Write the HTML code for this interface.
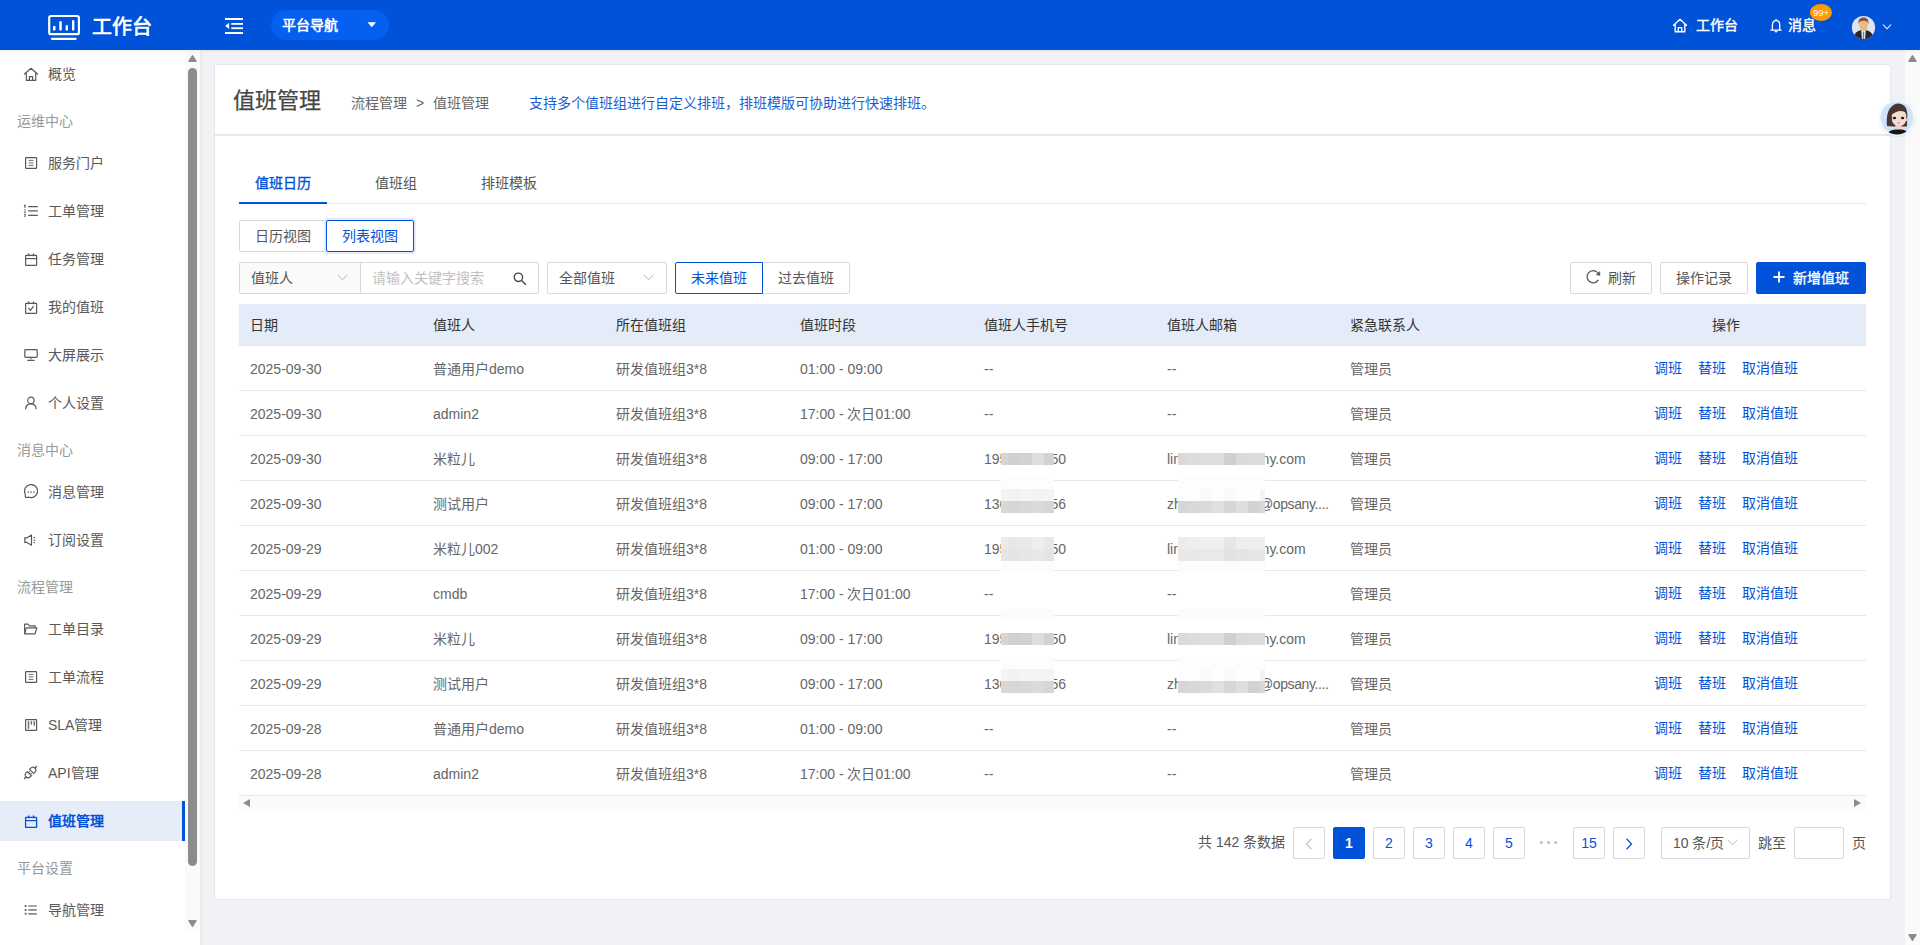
<!DOCTYPE html>
<html lang="zh-CN"><head><meta charset="utf-8">
<style>
*{box-sizing:border-box;margin:0;padding:0}
html,body{width:1920px;height:945px;overflow:hidden}
body{position:relative;background:#f0f2f5;font-family:"Liberation Sans",sans-serif;font-size:14px;color:#555}
.a{position:absolute}
.t{position:absolute;white-space:nowrap;line-height:20px}
/* header */
#hd{left:0;top:0;width:1920px;height:50px;background:#0052d9;}
#hdl{left:0;top:0;width:200px;height:50px;background:#0050d6}
/* sidebar */
#sb{left:0;top:50px;width:200px;height:895px;background:#fff}
#sbtrack{left:185px;top:50px;width:15px;height:881px;background:#fafafa}
#sbthumb{left:188px;top:68px;width:9px;height:798px;background:#8c8c8c;border-radius:5px}
.tri-up{width:0;height:0;border-left:4.5px solid transparent;border-right:4.5px solid transparent;border-bottom:7px solid #8c8c8c}
.tri-dn{width:0;height:0;border-left:4.5px solid transparent;border-right:4.5px solid transparent;border-top:7px solid #8c8c8c}
.si{position:absolute;left:0;width:185px;height:40px}
.si .ic{position:absolute;left:24px;top:13px;width:14px;height:14px}
.si .tx{position:absolute;left:48px;top:10px;line-height:20px;color:#595959;white-space:nowrap}
.sg{position:absolute;left:17px;line-height:20px;color:#999;white-space:nowrap}
.si.on{background:#e6edf9}
.si.on .tx{color:#0052d9;font-weight:bold}
.si.on:after{content:"";position:absolute;right:0;top:0;width:3px;height:40px;background:#0052d9}
/* page scrollbar */
#pgtrack{left:1905px;top:50px;width:15px;height:895px;background:#fafafa}
/* card */
#card{left:214px;top:64px;width:1677px;height:836px;background:#fff;border:1px solid #e6e7ea;border-radius:2px}
#cardsep{left:214px;top:134px;width:1677px;height:2px;background:#e8e8e8}
.btn{position:absolute;height:32px;border:1px solid #d9d9d9;border-radius:2px;background:#fff;color:#555;line-height:30px;text-align:center;white-space:nowrap}
.blue{color:#0052d9}
/* table */
#thead{left:239px;top:304px;width:1627px;height:42px;background:#e4ebf9;border-bottom:1px solid #e3e5e8}
.th{position:absolute;top:315px;line-height:20px;color:#333;white-space:nowrap}
.row{position:absolute;left:239px;width:1627px;height:45px;border-bottom:1px solid #e8e8e8}
.td{position:absolute;top:13px;line-height:20px;color:#666;white-space:nowrap}
.op{position:absolute;top:12px;line-height:20px;color:#0052d9;white-space:nowrap}
.pg{position:absolute;top:827px;width:32px;height:32px;border:1px solid #d9d9d9;border-radius:2px;text-align:center;line-height:30px;color:#0052d9;background:#fff}
.px{position:absolute;left:0;top:0}
.sx{position:absolute;top:0}
</style></head><body>
<div id="hd" class="a"></div>

<svg class="a" style="left:44px;top:10px" width="40" height="34" viewBox="0 0 40 34">
<rect x="5.2" y="6" width="29.7" height="18.2" rx="1.8" fill="none" stroke="#fff" stroke-width="2.2"/>
<rect x="9" y="15.8" width="2.5" height="4.8" rx="1.2" fill="#fff"/>
<rect x="15.3" y="11" width="2.5" height="9.6" rx="1.2" fill="#fff"/>
<rect x="21.6" y="15.1" width="2.4" height="5.5" rx="1.2" fill="#fff"/>
<rect x="28" y="9.9" width="2.4" height="10.7" rx="1.2" fill="#fff"/>
<rect x="6.8" y="27.7" width="25.9" height="2.2" rx="1.1" fill="#fff"/>
</svg>
<div class="t" style="left:92px;top:13px;font-size:20px;line-height:28px;color:#fff;font-weight:bold">工作台</div>
<svg class="a" style="left:218px;top:12px" width="32" height="28" viewBox="0 0 32 28">
<rect x="7" y="6" width="18" height="2" fill="#fff"/>
<rect x="13.3" y="11" width="11.7" height="1.8" fill="#fff"/>
<rect x="13.3" y="15.3" width="11.7" height="1.8" fill="#fff"/>
<rect x="7" y="20" width="18" height="2" fill="#fff"/>
<path d="M11.1 10.8 L11.1 17 L7.1 13.9 Z" fill="#fff"/>
</svg>
<div class="a" style="left:271px;top:10px;width:118px;height:30px;border-radius:15px;background:#0560f2"></div>
<div class="t" style="left:282px;top:15px;color:#fff;font-weight:bold">平台导航</div>
<svg class="a" style="left:367px;top:22px" width="10" height="6" viewBox="0 0 10 6"><path d="M0.5 0.3 L9 0.3 L4.75 5.3 Z" fill="#fff"/></svg>

<svg class="a" style="left:1672px;top:18px" width="16" height="15" viewBox="0 0 16 15">
<path d="M1.5 7.2 L8 1.2 L14.5 7.2 M3.2 5.8 L3.2 13.8 L12.8 13.8 L12.8 5.8 M6.3 13.8 L6.3 9.6 L9.7 9.6 L9.7 13.8" fill="none" stroke="#fff" stroke-width="1.4" stroke-linejoin="round" stroke-linecap="round"/>
</svg>
<div class="t" style="left:1696px;top:15px;color:#fff;-webkit-text-stroke:0.4px #fff">工作台</div>
<svg class="a" style="left:1769px;top:18px" width="14" height="15" viewBox="0 0 14 15"><path d="M3.4 12 L3.4 6.8 C3.4 4.2 5 2.6 7.05 2.6 C9.1 2.6 10.7 4.2 10.7 6.8 L10.7 12 M1.9 12.2 L12.2 12.2" fill="none" stroke="#fff" stroke-width="1.3" stroke-linecap="round" stroke-linejoin="round"/><path d="M7.05 1 L7.05 2.6" stroke="#fff" stroke-width="1.3"/><path d="M5.7 13.3 L8.4 13.3 L7.05 14.3 Z" fill="#fff" stroke="#fff" stroke-width="0.8" stroke-linejoin="round"/></svg>
<div class="t" style="left:1788px;top:15px;color:#fff;-webkit-text-stroke:0.4px #fff">消息</div>
<div class="a" style="left:1810px;top:4px;width:22px;height:17px;border-radius:50%;background:#ff9a00;color:#fff;font-size:9.5px;line-height:18px;text-align:center">99+</div>
<svg class="a" style="left:1851px;top:15px" width="25" height="25" viewBox="0 0 25 25">
<defs><clipPath id="hac"><circle cx="12.5" cy="12.5" r="11.6"/></clipPath></defs>
<circle cx="12.5" cy="12.5" r="11.6" fill="#dfe3ec"/>
<g clip-path="url(#hac)">
<path d="M2 26 C2.5 18.5 6 16 10 15.3 L15 15.3 C19 16 22.5 18.5 23 26 Z" fill="#262626"/>
<path d="M10.3 15.3 L14.7 15.3 L14 26 L11 26 Z" fill="#fff"/>
<path d="M11.7 16.5 L13.3 16.5 L13.2 26 L11.8 26 Z" fill="#4a86d8"/>
<path d="M8 7 C8 4.5 9.8 3.8 12.5 3.8 C15.2 3.8 17 4.5 17 7 L16.8 10.5 C16.5 13.5 14.6 15.5 12.5 15.5 C10.4 15.5 8.5 13.5 8.2 10.5 Z" fill="#ecb87d"/>
<path d="M7.6 9.5 C7 4.3 9 2.4 12.5 2.4 C16 2.4 18 4.3 17.4 9.5 C17 6.5 16 5.8 12.5 5.8 C9 5.8 8 6.5 7.6 9.5 Z" fill="#7b5246"/>
</g>
</svg>
<svg class="a" style="left:1882px;top:23px" width="10" height="8" viewBox="0 0 10 8"><path d="M1 1.5 L5 5.8 L9 1.5" fill="none" stroke="#fff" stroke-width="1.1"/></svg>

<div id="sb" class="a"></div>
<div id="sbtrack" class="a"></div>
<div id="sbthumb" class="a"></div>
<div class="si" style="top:54px"><svg class="ic" style="left:23px;top:13px;width:16px;height:15px" viewBox="0 0 16 15"><path d="M1.5 7 L8 1.3 L14.5 7 M3.3 5.6 L3.3 13.4 L12.7 13.4 L12.7 5.6 M6.4 13.4 L6.4 9.6 L9.6 9.6 L9.6 13.4" stroke="#595959" stroke-width="1.2" fill="none" stroke-linejoin="round" stroke-linecap="round"/></svg><div class="tx">概览</div></div>
<div class="sg" style="top:111px">运维中心</div>
<div class="si" style="top:143px"><svg class="ic" viewBox="0 0 14 14"><rect x="1.6" y="1.6" width="11" height="10.8" rx="0.6" stroke="#595959" stroke-width="1.2" fill="none"/><path d="M4.6 4.4 H9.5 M4.6 6.9 H9.5 M4.6 9.4 H9.5" stroke="#595959" stroke-width="0.9"/></svg><div class="tx">服务门户</div></div>
<div class="si" style="top:191px"><svg class="ic" style="left:23px;width:16px" viewBox="0 0 16 14"><path d="M0.9 1.6 L2 1.2 L2 4" fill="none" stroke="#595959" stroke-width="1.1"/><path d="M1 5.9 C1.4 5.4 2.6 5.4 2.6 6.2 C2.6 6.8 1.2 7.4 1 8.3 L2.9 8.3" fill="none" stroke="#6a6a6a" stroke-width="0.9"/><path d="M1 10.3 L2.8 10.3 L1.8 11.3 C2.8 11.3 3 12.8 1 12.6" fill="none" stroke="#595959" stroke-width="0.9"/><path d="M5.2 2.6 H14.8 M5.2 6.9 H14.8 M5.2 11.4 H14.8" stroke="#595959" stroke-width="1.2"/></svg><div class="tx">工单管理</div></div>
<div class="si" style="top:239px"><svg class="ic" viewBox="0 0 14 14"><rect x="1.6" y="3.3" width="11" height="10" rx="0.4" stroke="#595959" stroke-width="1.2" fill="none"/><path d="M1.6 6.6 H12.6" stroke="#595959" stroke-width="1.2" fill="none"/><path d="M4.6 1.6 V4.2 M9.5 1.6 V4.2" stroke="#595959" stroke-width="1.3"/></svg><div class="tx">任务管理</div></div>
<div class="si" style="top:287px"><svg class="ic" viewBox="0 0 14 14"><rect x="1.6" y="3.3" width="11" height="10" rx="0.4" stroke="#595959" stroke-width="1.2" fill="none"/><path d="M4.6 1.6 V4.2 M9.5 1.6 V4.2" stroke="#595959" stroke-width="1.3"/><path d="M4.4 8 L6.5 10.3 L9.6 6.1" stroke="#595959" stroke-width="1.2" fill="none"/></svg><div class="tx">我的值班</div></div>
<div class="si" style="top:335px"><svg class="ic" style="left:23px;width:16px" viewBox="0 0 16 14"><rect x="1.8" y="1.6" width="12.4" height="7.8" rx="0.8" stroke="#595959" stroke-width="1.2" fill="none"/><path d="M8 9.7 V11.6" stroke="#7a7a7a" stroke-width="1.2"/><path d="M4.8 12.3 H11.2" stroke="#595959" stroke-width="1.3" stroke-linecap="round"/></svg><div class="tx">大屏展示</div></div>
<div class="si" style="top:383px"><svg class="ic" viewBox="0 0 14 14"><circle cx="6.9" cy="4.4" r="3.2" stroke="#595959" stroke-width="1.2" fill="none"/><path d="M1.5 13.2 C1.8 9.6 4 7.8 6.9 7.8 C9.8 7.8 12 9.6 12.3 13.2" stroke="#595959" stroke-width="1.2" fill="none"/></svg><div class="tx">个人设置</div></div>
<div class="sg" style="top:440px">消息中心</div>
<div class="si" style="top:472px"><svg class="ic" style="left:23px;width:15px;height:15px;top:12px" viewBox="0 0 15 15"><path d="M2.5 13.5 L2.1 9.6 A6.5 6.5 0 1 1 6 13.2 Z" stroke="#595959" stroke-width="1.2" fill="none" stroke-linejoin="round"/><rect x="4.6" y="7.4" width="1.5" height="1.5" fill="#7a7a7a"/><rect x="7.4" y="7.4" width="1.5" height="1.5" fill="#7a7a7a"/><rect x="10.3" y="7.4" width="1.5" height="1.5" fill="#7a7a7a"/></svg><div class="tx">消息管理</div></div>
<div class="si" style="top:520px"><svg class="ic" style="left:23px;width:15px;top:13px" viewBox="0 0 15 14"><path d="M1.8 4.8 L4 4.8 L8.5 2 L8.5 12.2 L4 9.4 L1.8 9.4 Z" stroke="#595959" stroke-width="1.2" fill="none" stroke-linejoin="round"/><path d="M10.6 5.2 L12 4.3 M10.6 9.2 L12 10.1" stroke="#595959" stroke-width="1.1"/><rect x="10.6" y="6.7" width="2" height="1.3" fill="#8a8a8a"/></svg><div class="tx">订阅设置</div></div>
<div class="sg" style="top:577px">流程管理</div>
<div class="si" style="top:609px"><svg class="ic" style="left:23px;width:15px" viewBox="0 0 15 14"><path d="M1.6 11.8 L1.6 2.2 L5 2.2 L6.4 3.9 L12.2 3.9 L12.2 5.6" stroke="#595959" stroke-width="1.2" fill="none" stroke-linejoin="round"/><path d="M1.6 11.8 L3.2 5.9 L13.9 5.9 L12 11.8 Z" stroke="#595959" stroke-width="1.2" fill="none" stroke-linejoin="round"/></svg><div class="tx">工单目录</div></div>
<div class="si" style="top:657px"><svg class="ic" viewBox="0 0 14 14"><rect x="1.6" y="1.6" width="11" height="10.8" rx="0.6" stroke="#595959" stroke-width="1.2" fill="none"/><path d="M4.6 4.4 H9.5 M4.6 6.9 H9.5 M4.6 9.4 H9.5" stroke="#595959" stroke-width="0.9"/></svg><div class="tx">工单流程</div></div>
<div class="si" style="top:705px"><svg class="ic" viewBox="0 0 14 14"><rect x="1.6" y="1.6" width="11" height="10.8" rx="0.5" stroke="#595959" stroke-width="1.2" fill="none"/><path d="M4.5 3.8 V10.2 M7.4 3.8 V6.1 M10.3 3.8 V7.2" stroke="#707070" stroke-width="1.5" stroke-linecap="round"/></svg><div class="tx">SLA管理</div></div>
<div class="si" style="top:753px"><svg class="ic" style="left:23px;width:15px;height:15px;top:12px" viewBox="0 0 15 15"><path d="M1.5 13.5 L3 12 M13.5 1.5 L12 3" stroke="#595959" stroke-width="1.3" stroke-linecap="round"/><path d="M3 12 C1.6 10.6 2 8.8 3.5 7.3 L4.3 6.6 L8.4 10.7 L7.7 11.5 C6.2 13 4.4 13.4 3 12 Z M5.6 7.6 L6.8 6.4 M7.4 9.4 L8.6 8.2" stroke="#595959" stroke-width="1.2" fill="none" stroke-linejoin="round"/><path d="M12 3 C13.4 4.4 13 6.2 11.5 7.7 L10.7 8.4 L6.6 4.3 L7.3 3.5 C8.8 2 10.6 1.6 12 3 Z" stroke="#595959" stroke-width="1.2" fill="none" stroke-linejoin="round"/></svg><div class="tx">API管理</div></div>
<div class="si on" style="top:801px"><svg class="ic" viewBox="0 0 14 14"><rect x="1.6" y="3.3" width="11" height="10" rx="0.4" stroke="#0052d9" stroke-width="1.3" fill="none"/><path d="M1.6 6.6 H12.6" stroke="#0052d9" stroke-width="1.2"/><path d="M4.6 1.6 V4.2 M9.5 1.6 V4.2" stroke="#0052d9" stroke-width="1.4"/></svg><div class="tx">值班管理</div></div>
<div class="sg" style="top:858px">平台设置</div>
<div class="si" style="top:890px"><svg class="ic" viewBox="0 0 14 14"><path d="M1.6 2 V4 M1.6 5.9 V7.9 M1.6 9.8 V11.8" stroke="#6a6a6a" stroke-width="1.8"/><path d="M4.2 3 H12.8 M4.2 6.9 H12.8 M4.2 10.8 H12.8" stroke="#8a8a8a" stroke-width="1.7"/></svg><div class="tx">导航管理</div></div>
<svg class="a" style="left:187px;top:54px" width="11" height="9" viewBox="0 0 11 9"><path d="M1.9 7.3 L5.5 1.7 L9.1 7.3 Z" fill="#8c8c8c" stroke="#8c8c8c" stroke-width="1.3" stroke-linejoin="round"/></svg>
<svg class="a" style="left:187px;top:919px" width="11" height="9" viewBox="0 0 11 9"><path d="M1.9 1.7 L5.5 7.3 L9.1 1.7 Z" fill="#8c8c8c" stroke="#8c8c8c" stroke-width="1.3" stroke-linejoin="round"/></svg>
<div class="a" style="left:0;top:931px;width:200px;height:14px;background:#fff"></div>

<div id="pgtrack" class="a"></div>
<div class="a" style="left:200px;top:50px;width:5px;height:895px;background:linear-gradient(90deg,rgba(0,0,0,.035),rgba(0,0,0,0))"></div>
<svg class="a" style="left:1907px;top:54px" width="11" height="9" viewBox="0 0 11 9"><path d="M1.9 7.3 L5.5 1.7 L9.1 7.3 Z" fill="#8c8c8c" stroke="#8c8c8c" stroke-width="1.3" stroke-linejoin="round"/></svg>
<svg class="a" style="left:1907px;top:933px" width="11" height="9" viewBox="0 0 11 9"><path d="M1.9 1.7 L5.5 7.3 L9.1 1.7 Z" fill="#8c8c8c" stroke="#8c8c8c" stroke-width="1.3" stroke-linejoin="round"/></svg>
<div id="card" class="a"></div>
<div id="cardsep" class="a"></div>

<div class="t" style="left:233px;top:86px;font-size:22px;line-height:30px;color:#454545;-webkit-text-stroke:0.25px #454545">值班管理</div>
<div class="t" style="left:351px;top:93px;color:#666">流程管理</div>
<div class="t" style="left:416px;top:93px;color:#666">&gt;</div>
<div class="t" style="left:433px;top:93px;color:#666">值班管理</div>
<div class="t" style="left:529px;top:93px;color:#1a5fd1">支持多个值班组进行自定义排班，排班模版可协助进行快速排班。</div>

<div class="a" style="left:239px;top:203px;width:1627px;height:1px;background:#e8e8e8"></div>
<div class="a" style="left:239px;top:202px;width:88px;height:2px;background:#0052d9"></div>
<div class="t" style="left:255px;top:173px;color:#0052d9;-webkit-text-stroke:0.35px #0052d9">值班日历</div>
<div class="t" style="left:375px;top:173px;color:#555">值班组</div>
<div class="t" style="left:481px;top:173px;color:#555">排班模板</div>

<div class="btn" style="left:239px;top:220px;width:88px;border-radius:2px 0 0 2px">日历视图</div>
<div class="btn" style="left:326px;top:220px;width:88px;border-color:#0052d9;color:#0052d9;border-radius:2px;box-shadow:0 0 0 2px #e2eafb">列表视图</div>

<div class="a" style="left:239px;top:262px;width:122px;height:32px;border:1px solid #d9d9d9;border-radius:2px 0 0 2px;background:#fafafa"></div>
<div class="t" style="left:251px;top:268px;color:#555">值班人</div>
<svg class="a" style="left:337px;top:274px" width="11" height="7" viewBox="0 0 11 7"><path d="M0.8 0.8 L5.5 5.8 L10.2 0.8" fill="none" stroke="#b5b5b5" stroke-width="1"/></svg>
<div class="a" style="left:360px;top:262px;width:179px;height:32px;border:1px solid #d9d9d9;border-radius:0 2px 2px 0;background:#fff"></div>
<div class="t" style="left:372px;top:268px;color:#bfbfbf">请输入关键字搜索</div>
<svg class="a" style="left:513px;top:272px" width="14" height="13" viewBox="0 0 14 13"><circle cx="5.4" cy="5.3" r="4.2" fill="none" stroke="#444" stroke-width="1.3"/><path d="M8.5 8.4 L12.4 12.2" stroke="#444" stroke-width="1.4" stroke-linecap="round"/></svg>

<div class="a" style="left:547px;top:262px;width:120px;height:32px;border:1px solid #d9d9d9;border-radius:2px;background:#fff"></div>
<div class="t" style="left:559px;top:268px;color:#555">全部值班</div>
<svg class="a" style="left:643px;top:274px" width="11" height="7" viewBox="0 0 11 7"><path d="M0.8 0.8 L5.5 5.8 L10.2 0.8" fill="none" stroke="#b5b5b5" stroke-width="1"/></svg>
<div class="btn" style="left:762px;top:262px;width:88px;border-radius:0 2px 2px 0">过去值班</div>
<div class="btn" style="left:675px;top:262px;width:88px;border-color:#0052d9;color:#0052d9;border-radius:2px 0 0 2px">未来值班</div>

<div class="btn" style="left:1570px;top:262px;width:82px"><span style="display:inline-block;width:22px"></span>刷新</div>
<svg class="a" style="left:1584px;top:269px" width="18" height="16" viewBox="0 0 18 16"><path d="M13.4 3.4 A6.1 6.1 0 1 0 14.2 11.2" fill="none" stroke="#555" stroke-width="1.25" stroke-linecap="round"/><path d="M15.9 2.6 L15.9 6.4 L12.2 5.6 Z" fill="#555" stroke="#555" stroke-width="0.5" stroke-linejoin="round"/></svg>
<div class="btn" style="left:1660px;top:262px;width:88px">操作记录</div>
<div class="btn" style="left:1756px;top:262px;width:110px;background:#0052d9;border-color:#0052d9;color:#fff;-webkit-text-stroke:0.35px #fff"><span style="display:inline-block;width:20px"></span>新增值班</div>
<svg class="a" style="left:1773px;top:271px" width="12" height="12" viewBox="0 0 12 12"><path d="M6 0.5 V11.5 M0.5 6 H11.5" stroke="#fff" stroke-width="1.8"/></svg>

<div id="thead" class="a"></div>
<div class="th" style="left:250px">日期</div>
<div class="th" style="left:433px">值班人</div>
<div class="th" style="left:616px">所在值班组</div>
<div class="th" style="left:800px">值班时段</div>
<div class="th" style="left:984px">值班人手机号</div>
<div class="th" style="left:1167px">值班人邮箱</div>
<div class="th" style="left:1350px">紧急联系人</div>
<div class="th" style="left:1712px">操作</div>
<div class="row" style="top:346px"><div class="td" style="left:11px">2025-09-30</div><div class="td" style="left:194px">普通用户demo</div><div class="td" style="left:377px">研发值班组3*8</div><div class="td" style="left:561px">01:00 - 09:00</div><div class="td" style="left:745px">--</div><div class="td" style="left:928px">--</div><div class="td" style="left:1111px">管理员</div><div class="op" style="left:1415px">调班</div><div class="op" style="left:1459px">替班</div><div class="op" style="left:1503px">取消值班</div></div>
<div class="row" style="top:391px"><div class="td" style="left:11px">2025-09-30</div><div class="td" style="left:194px">admin2</div><div class="td" style="left:377px">研发值班组3*8</div><div class="td" style="left:561px">17:00 - 次日01:00</div><div class="td" style="left:745px">--</div><div class="td" style="left:928px">--</div><div class="td" style="left:1111px">管理员</div><div class="op" style="left:1415px">调班</div><div class="op" style="left:1459px">替班</div><div class="op" style="left:1503px">取消值班</div></div>
<div class="row" style="top:436px"><div class="td" style="left:11px">2025-09-30</div><div class="td" style="left:194px">米粒儿</div><div class="td" style="left:377px">研发值班组3*8</div><div class="td" style="left:561px">09:00 - 17:00</div><div class="td" style="left:745px"><span class="px">195</span><span class="sx" style="left:66.5px">50</span></div><div class="td" style="left:928px"><span class="px">lin</span><span class="sx" style="left:94.6px">ny.com</span></div><div class="td" style="left:1111px">管理员</div><div class="op" style="left:1415px">调班</div><div class="op" style="left:1459px">替班</div><div class="op" style="left:1503px">取消值班</div></div>
<div class="row" style="top:481px"><div class="td" style="left:11px">2025-09-30</div><div class="td" style="left:194px">测试用户</div><div class="td" style="left:377px">研发值班组3*8</div><div class="td" style="left:561px">09:00 - 17:00</div><div class="td" style="left:745px"><span class="px">136</span><span class="sx" style="left:66.5px">56</span></div><div class="td" style="left:928px"><span class="px">zha</span><span class="sx" style="left:92px;letter-spacing:-0.4px">@opsany....</span></div><div class="td" style="left:1111px">管理员</div><div class="op" style="left:1415px">调班</div><div class="op" style="left:1459px">替班</div><div class="op" style="left:1503px">取消值班</div></div>
<div class="row" style="top:526px"><div class="td" style="left:11px">2025-09-29</div><div class="td" style="left:194px">米粒儿002</div><div class="td" style="left:377px">研发值班组3*8</div><div class="td" style="left:561px">01:00 - 09:00</div><div class="td" style="left:745px"><span class="px">195</span><span class="sx" style="left:66.5px">50</span></div><div class="td" style="left:928px"><span class="px">lin</span><span class="sx" style="left:94.6px">ny.com</span></div><div class="td" style="left:1111px">管理员</div><div class="op" style="left:1415px">调班</div><div class="op" style="left:1459px">替班</div><div class="op" style="left:1503px">取消值班</div></div>
<div class="row" style="top:571px"><div class="td" style="left:11px">2025-09-29</div><div class="td" style="left:194px">cmdb</div><div class="td" style="left:377px">研发值班组3*8</div><div class="td" style="left:561px">17:00 - 次日01:00</div><div class="td" style="left:745px">--</div><div class="td" style="left:928px">--</div><div class="td" style="left:1111px">管理员</div><div class="op" style="left:1415px">调班</div><div class="op" style="left:1459px">替班</div><div class="op" style="left:1503px">取消值班</div></div>
<div class="row" style="top:616px"><div class="td" style="left:11px">2025-09-29</div><div class="td" style="left:194px">米粒儿</div><div class="td" style="left:377px">研发值班组3*8</div><div class="td" style="left:561px">09:00 - 17:00</div><div class="td" style="left:745px"><span class="px">195</span><span class="sx" style="left:66.5px">50</span></div><div class="td" style="left:928px"><span class="px">lin</span><span class="sx" style="left:94.6px">ny.com</span></div><div class="td" style="left:1111px">管理员</div><div class="op" style="left:1415px">调班</div><div class="op" style="left:1459px">替班</div><div class="op" style="left:1503px">取消值班</div></div>
<div class="row" style="top:661px"><div class="td" style="left:11px">2025-09-29</div><div class="td" style="left:194px">测试用户</div><div class="td" style="left:377px">研发值班组3*8</div><div class="td" style="left:561px">09:00 - 17:00</div><div class="td" style="left:745px"><span class="px">136</span><span class="sx" style="left:66.5px">56</span></div><div class="td" style="left:928px"><span class="px">zha</span><span class="sx" style="left:92px;letter-spacing:-0.4px">@opsany....</span></div><div class="td" style="left:1111px">管理员</div><div class="op" style="left:1415px">调班</div><div class="op" style="left:1459px">替班</div><div class="op" style="left:1503px">取消值班</div></div>
<div class="row" style="top:706px"><div class="td" style="left:11px">2025-09-28</div><div class="td" style="left:194px">普通用户demo</div><div class="td" style="left:377px">研发值班组3*8</div><div class="td" style="left:561px">01:00 - 09:00</div><div class="td" style="left:745px">--</div><div class="td" style="left:928px">--</div><div class="td" style="left:1111px">管理员</div><div class="op" style="left:1415px">调班</div><div class="op" style="left:1459px">替班</div><div class="op" style="left:1503px">取消值班</div></div>
<div class="row" style="top:751px"><div class="td" style="left:11px">2025-09-28</div><div class="td" style="left:194px">admin2</div><div class="td" style="left:377px">研发值班组3*8</div><div class="td" style="left:561px">17:00 - 次日01:00</div><div class="td" style="left:745px">--</div><div class="td" style="left:928px">--</div><div class="td" style="left:1111px">管理员</div><div class="op" style="left:1415px">调班</div><div class="op" style="left:1459px">替班</div><div class="op" style="left:1503px">取消值班</div></div>
<div class="a" style="left:1001px;top:453px;width:7px;height:12px;background:#d6d6d6"></div>
<div class="a" style="left:1008px;top:453px;width:12px;height:12px;background:#d0d0d0"></div>
<div class="a" style="left:1020px;top:453px;width:12px;height:12px;background:#d2d2d2"></div>
<div class="a" style="left:1032px;top:453px;width:12px;height:12px;background:#dedede"></div>
<div class="a" style="left:1044px;top:453px;width:10px;height:12px;background:#d2d2d2"></div>
<div class="a" style="left:1178px;top:453px;width:10px;height:12px;background:#dadada"></div>
<div class="a" style="left:1188px;top:453px;width:12px;height:12px;background:#dcdcdc"></div>
<div class="a" style="left:1200px;top:453px;width:12px;height:12px;background:#dddddd"></div>
<div class="a" style="left:1212px;top:453px;width:12px;height:12px;background:#dddddd"></div>
<div class="a" style="left:1224px;top:453px;width:12px;height:12px;background:#cfcfcf"></div>
<div class="a" style="left:1236px;top:453px;width:12px;height:12px;background:#dadada"></div>
<div class="a" style="left:1248px;top:453px;width:12px;height:12px;background:#dcdcdc"></div>
<div class="a" style="left:1260px;top:453px;width:5px;height:12px;background:#dcdcdc"></div>
<div class="a" style="left:1001px;top:477px;width:7px;height:12px;background:#fdfdfd"></div>
<div class="a" style="left:1008px;top:477px;width:12px;height:12px;background:#fdfdfd"></div>
<div class="a" style="left:1020px;top:477px;width:12px;height:12px;background:#fdfdfd"></div>
<div class="a" style="left:1032px;top:477px;width:12px;height:12px;background:#fdfdfd"></div>
<div class="a" style="left:1044px;top:477px;width:10px;height:12px;background:#fdfdfd"></div>
<div class="a" style="left:1178px;top:477px;width:10px;height:12px;background:#fdfdfd"></div>
<div class="a" style="left:1188px;top:477px;width:12px;height:12px;background:#fdfdfd"></div>
<div class="a" style="left:1200px;top:477px;width:12px;height:12px;background:#fdfdfd"></div>
<div class="a" style="left:1212px;top:477px;width:12px;height:12px;background:#fdfdfd"></div>
<div class="a" style="left:1224px;top:477px;width:12px;height:12px;background:#fdfdfd"></div>
<div class="a" style="left:1236px;top:477px;width:12px;height:12px;background:#fdfdfd"></div>
<div class="a" style="left:1248px;top:477px;width:12px;height:12px;background:#fdfdfd"></div>
<div class="a" style="left:1260px;top:477px;width:5px;height:12px;background:#fdfdfd"></div>
<div class="a" style="left:1001px;top:489px;width:7px;height:12px;background:#f4f4f4"></div>
<div class="a" style="left:1008px;top:489px;width:12px;height:12px;background:#f2f2f2"></div>
<div class="a" style="left:1020px;top:489px;width:12px;height:12px;background:#f4f4f4"></div>
<div class="a" style="left:1032px;top:489px;width:12px;height:12px;background:#f3f3f3"></div>
<div class="a" style="left:1044px;top:489px;width:10px;height:12px;background:#f4f4f4"></div>
<div class="a" style="left:1178px;top:489px;width:10px;height:12px;background:#fdfdfd"></div>
<div class="a" style="left:1188px;top:489px;width:12px;height:12px;background:#fdfdfd"></div>
<div class="a" style="left:1200px;top:489px;width:12px;height:12px;background:#fafafa"></div>
<div class="a" style="left:1212px;top:489px;width:12px;height:12px;background:#fefefe"></div>
<div class="a" style="left:1224px;top:489px;width:12px;height:12px;background:#fafafa"></div>
<div class="a" style="left:1236px;top:489px;width:12px;height:12px;background:#fefefe"></div>
<div class="a" style="left:1248px;top:489px;width:12px;height:12px;background:#fefefe"></div>
<div class="a" style="left:1260px;top:489px;width:5px;height:12px;background:#f3f3f3"></div>
<div class="a" style="left:1001px;top:501px;width:7px;height:12px;background:#d8d8d8"></div>
<div class="a" style="left:1008px;top:501px;width:12px;height:12px;background:#d6d6d6"></div>
<div class="a" style="left:1020px;top:501px;width:12px;height:12px;background:#d8d8d8"></div>
<div class="a" style="left:1032px;top:501px;width:12px;height:12px;background:#dadada"></div>
<div class="a" style="left:1044px;top:501px;width:10px;height:12px;background:#d6d6d6"></div>
<div class="a" style="left:1178px;top:501px;width:10px;height:12px;background:#d6d6d6"></div>
<div class="a" style="left:1188px;top:501px;width:12px;height:12px;background:#d8d8d8"></div>
<div class="a" style="left:1200px;top:501px;width:12px;height:12px;background:#dadada"></div>
<div class="a" style="left:1212px;top:501px;width:12px;height:12px;background:#e0e0e0"></div>
<div class="a" style="left:1224px;top:501px;width:12px;height:12px;background:#d6d6d6"></div>
<div class="a" style="left:1236px;top:501px;width:12px;height:12px;background:#dedede"></div>
<div class="a" style="left:1248px;top:501px;width:12px;height:12px;background:#d2d2d2"></div>
<div class="a" style="left:1260px;top:501px;width:5px;height:12px;background:#d8d8d8"></div>
<div class="a" style="left:1001px;top:633px;width:7px;height:12px;background:#d6d6d6"></div>
<div class="a" style="left:1008px;top:633px;width:12px;height:12px;background:#d0d0d0"></div>
<div class="a" style="left:1020px;top:633px;width:12px;height:12px;background:#d2d2d2"></div>
<div class="a" style="left:1032px;top:633px;width:12px;height:12px;background:#dedede"></div>
<div class="a" style="left:1044px;top:633px;width:10px;height:12px;background:#d2d2d2"></div>
<div class="a" style="left:1178px;top:633px;width:10px;height:12px;background:#dadada"></div>
<div class="a" style="left:1188px;top:633px;width:12px;height:12px;background:#dcdcdc"></div>
<div class="a" style="left:1200px;top:633px;width:12px;height:12px;background:#dddddd"></div>
<div class="a" style="left:1212px;top:633px;width:12px;height:12px;background:#dddddd"></div>
<div class="a" style="left:1224px;top:633px;width:12px;height:12px;background:#cfcfcf"></div>
<div class="a" style="left:1236px;top:633px;width:12px;height:12px;background:#dadada"></div>
<div class="a" style="left:1248px;top:633px;width:12px;height:12px;background:#dcdcdc"></div>
<div class="a" style="left:1260px;top:633px;width:5px;height:12px;background:#dcdcdc"></div>
<div class="a" style="left:1001px;top:657px;width:7px;height:12px;background:#fdfdfd"></div>
<div class="a" style="left:1008px;top:657px;width:12px;height:12px;background:#fdfdfd"></div>
<div class="a" style="left:1020px;top:657px;width:12px;height:12px;background:#fdfdfd"></div>
<div class="a" style="left:1032px;top:657px;width:12px;height:12px;background:#fdfdfd"></div>
<div class="a" style="left:1044px;top:657px;width:10px;height:12px;background:#fdfdfd"></div>
<div class="a" style="left:1178px;top:657px;width:10px;height:12px;background:#fdfdfd"></div>
<div class="a" style="left:1188px;top:657px;width:12px;height:12px;background:#fdfdfd"></div>
<div class="a" style="left:1200px;top:657px;width:12px;height:12px;background:#fdfdfd"></div>
<div class="a" style="left:1212px;top:657px;width:12px;height:12px;background:#fdfdfd"></div>
<div class="a" style="left:1224px;top:657px;width:12px;height:12px;background:#fdfdfd"></div>
<div class="a" style="left:1236px;top:657px;width:12px;height:12px;background:#fdfdfd"></div>
<div class="a" style="left:1248px;top:657px;width:12px;height:12px;background:#fdfdfd"></div>
<div class="a" style="left:1260px;top:657px;width:5px;height:12px;background:#fdfdfd"></div>
<div class="a" style="left:1001px;top:669px;width:7px;height:12px;background:#f4f4f4"></div>
<div class="a" style="left:1008px;top:669px;width:12px;height:12px;background:#f2f2f2"></div>
<div class="a" style="left:1020px;top:669px;width:12px;height:12px;background:#f4f4f4"></div>
<div class="a" style="left:1032px;top:669px;width:12px;height:12px;background:#f3f3f3"></div>
<div class="a" style="left:1044px;top:669px;width:10px;height:12px;background:#f4f4f4"></div>
<div class="a" style="left:1178px;top:669px;width:10px;height:12px;background:#fdfdfd"></div>
<div class="a" style="left:1188px;top:669px;width:12px;height:12px;background:#fdfdfd"></div>
<div class="a" style="left:1200px;top:669px;width:12px;height:12px;background:#fafafa"></div>
<div class="a" style="left:1212px;top:669px;width:12px;height:12px;background:#fefefe"></div>
<div class="a" style="left:1224px;top:669px;width:12px;height:12px;background:#fafafa"></div>
<div class="a" style="left:1236px;top:669px;width:12px;height:12px;background:#fefefe"></div>
<div class="a" style="left:1248px;top:669px;width:12px;height:12px;background:#fefefe"></div>
<div class="a" style="left:1260px;top:669px;width:5px;height:12px;background:#f3f3f3"></div>
<div class="a" style="left:1001px;top:681px;width:7px;height:12px;background:#d8d8d8"></div>
<div class="a" style="left:1008px;top:681px;width:12px;height:12px;background:#d6d6d6"></div>
<div class="a" style="left:1020px;top:681px;width:12px;height:12px;background:#d8d8d8"></div>
<div class="a" style="left:1032px;top:681px;width:12px;height:12px;background:#dadada"></div>
<div class="a" style="left:1044px;top:681px;width:10px;height:12px;background:#d6d6d6"></div>
<div class="a" style="left:1178px;top:681px;width:10px;height:12px;background:#d6d6d6"></div>
<div class="a" style="left:1188px;top:681px;width:12px;height:12px;background:#d8d8d8"></div>
<div class="a" style="left:1200px;top:681px;width:12px;height:12px;background:#dadada"></div>
<div class="a" style="left:1212px;top:681px;width:12px;height:12px;background:#e0e0e0"></div>
<div class="a" style="left:1224px;top:681px;width:12px;height:12px;background:#d6d6d6"></div>
<div class="a" style="left:1236px;top:681px;width:12px;height:12px;background:#dedede"></div>
<div class="a" style="left:1248px;top:681px;width:12px;height:12px;background:#d2d2d2"></div>
<div class="a" style="left:1260px;top:681px;width:5px;height:12px;background:#d8d8d8"></div>
<div class="a" style="left:1001px;top:537px;width:7px;height:12px;background:#ebebeb"></div>
<div class="a" style="left:1008px;top:537px;width:12px;height:12px;background:#e8e8e8"></div>
<div class="a" style="left:1020px;top:537px;width:12px;height:12px;background:#e9e9e9"></div>
<div class="a" style="left:1032px;top:537px;width:12px;height:12px;background:#eeeeee"></div>
<div class="a" style="left:1044px;top:537px;width:10px;height:12px;background:#e8e8e8"></div>
<div class="a" style="left:1178px;top:537px;width:10px;height:12px;background:#ececec"></div>
<div class="a" style="left:1188px;top:537px;width:12px;height:12px;background:#eeeeee"></div>
<div class="a" style="left:1200px;top:537px;width:12px;height:12px;background:#efefef"></div>
<div class="a" style="left:1212px;top:537px;width:12px;height:12px;background:#efefef"></div>
<div class="a" style="left:1224px;top:537px;width:12px;height:12px;background:#e6e6e6"></div>
<div class="a" style="left:1236px;top:537px;width:12px;height:12px;background:#eeeeee"></div>
<div class="a" style="left:1248px;top:537px;width:12px;height:12px;background:#eeeeee"></div>
<div class="a" style="left:1260px;top:537px;width:5px;height:12px;background:#eeeeee"></div>
<div class="a" style="left:1001px;top:549px;width:7px;height:12px;background:#e6e6e6"></div>
<div class="a" style="left:1008px;top:549px;width:12px;height:12px;background:#e4e4e4"></div>
<div class="a" style="left:1020px;top:549px;width:12px;height:12px;background:#e6e6e6"></div>
<div class="a" style="left:1032px;top:549px;width:12px;height:12px;background:#e8e8e8"></div>
<div class="a" style="left:1044px;top:549px;width:10px;height:12px;background:#e4e4e4"></div>
<div class="a" style="left:1178px;top:549px;width:10px;height:12px;background:#e8e8e8"></div>
<div class="a" style="left:1188px;top:549px;width:12px;height:12px;background:#e8e8e8"></div>
<div class="a" style="left:1200px;top:549px;width:12px;height:12px;background:#e9e9e9"></div>
<div class="a" style="left:1212px;top:549px;width:12px;height:12px;background:#e9e9e9"></div>
<div class="a" style="left:1224px;top:549px;width:12px;height:12px;background:#e2e2e2"></div>
<div class="a" style="left:1236px;top:549px;width:12px;height:12px;background:#e4e4e4"></div>
<div class="a" style="left:1248px;top:549px;width:12px;height:12px;background:#e6e6e6"></div>
<div class="a" style="left:1260px;top:549px;width:5px;height:12px;background:#e6e6e6"></div>
<div class="a" style="left:1001px;top:561px;width:7px;height:12px;background:#fcfcfc"></div>
<div class="a" style="left:1008px;top:561px;width:12px;height:12px;background:#fcfcfc"></div>
<div class="a" style="left:1020px;top:561px;width:12px;height:12px;background:#fcfcfc"></div>
<div class="a" style="left:1032px;top:561px;width:12px;height:12px;background:#fcfcfc"></div>
<div class="a" style="left:1044px;top:561px;width:10px;height:12px;background:#fcfcfc"></div>
<div class="a" style="left:1178px;top:561px;width:10px;height:12px;background:#fcfcfc"></div>
<div class="a" style="left:1188px;top:561px;width:12px;height:12px;background:#fcfcfc"></div>
<div class="a" style="left:1200px;top:561px;width:12px;height:12px;background:#fcfcfc"></div>
<div class="a" style="left:1212px;top:561px;width:12px;height:12px;background:#fcfcfc"></div>
<div class="a" style="left:1224px;top:561px;width:12px;height:12px;background:#fcfcfc"></div>
<div class="a" style="left:1236px;top:561px;width:12px;height:12px;background:#fcfcfc"></div>
<div class="a" style="left:1248px;top:561px;width:12px;height:12px;background:#fcfcfc"></div>
<div class="a" style="left:1260px;top:561px;width:5px;height:12px;background:#fcfcfc"></div>
<div class="a" style="left:1001px;top:609px;width:7px;height:12px;background:#fcfcfc"></div>
<div class="a" style="left:1008px;top:609px;width:12px;height:12px;background:#fcfcfc"></div>
<div class="a" style="left:1020px;top:609px;width:12px;height:12px;background:#fcfcfc"></div>
<div class="a" style="left:1032px;top:609px;width:12px;height:12px;background:#fcfcfc"></div>
<div class="a" style="left:1044px;top:609px;width:10px;height:12px;background:#fcfcfc"></div>
<div class="a" style="left:1178px;top:609px;width:10px;height:12px;background:#fcfcfc"></div>
<div class="a" style="left:1188px;top:609px;width:12px;height:12px;background:#fcfcfc"></div>
<div class="a" style="left:1200px;top:609px;width:12px;height:12px;background:#fcfcfc"></div>
<div class="a" style="left:1212px;top:609px;width:12px;height:12px;background:#fcfcfc"></div>
<div class="a" style="left:1224px;top:609px;width:12px;height:12px;background:#fcfcfc"></div>
<div class="a" style="left:1236px;top:609px;width:12px;height:12px;background:#fcfcfc"></div>
<div class="a" style="left:1248px;top:609px;width:12px;height:12px;background:#fcfcfc"></div>
<div class="a" style="left:1260px;top:609px;width:5px;height:12px;background:#fcfcfc"></div>
<div class="a" style="left:239px;top:796px;width:1627px;height:15px;background:#fafafa"></div>
<div class="a" style="left:243px;top:799px;width:0;height:0;border-top:4.5px solid transparent;border-bottom:4.5px solid transparent;border-right:7px solid #8c8c8c"></div>
<div class="a" style="left:1854px;top:799px;width:0;height:0;border-top:4.5px solid transparent;border-bottom:4.5px solid transparent;border-left:7px solid #8c8c8c"></div>
<div class="t" style="left:1198px;top:832px;color:#555">共 142 条数据</div>
<div class="pg" style="left:1293px;color:#bbb"><svg width="8" height="12" viewBox="0 0 8 12" style="margin-top:10px"><path d="M6.5 0.8 L1.5 6 L6.5 11.2" fill="none" stroke="#c0c0c0" stroke-width="1.2"/></svg></div>
<div class="pg" style="left:1333px;background:#0052d9;border-color:#0052d9;color:#fff;font-weight:bold">1</div>
<div class="pg" style="left:1373px">2</div>
<div class="pg" style="left:1413px">3</div>
<div class="pg" style="left:1453px">4</div>
<div class="pg" style="left:1493px">5</div>
<svg class="a" style="left:1539px;top:840px" width="19" height="5" viewBox="0 0 19 5"><circle cx="2.3" cy="2.5" r="1.6" fill="#c0c0c0"/><circle cx="9.5" cy="2.5" r="1.6" fill="#c0c0c0"/><circle cx="16.7" cy="2.5" r="1.6" fill="#c0c0c0"/></svg>
<div class="pg" style="left:1573px">15</div>
<div class="pg" style="left:1613px"><svg width="8" height="12" viewBox="0 0 8 12" style="margin-top:10px"><path d="M1.5 0.8 L6.5 6 L1.5 11.2" fill="none" stroke="#0052d9" stroke-width="1.3"/></svg></div>
<div class="a" style="left:1661px;top:827px;width:89px;height:32px;border:1px solid #d9d9d9;border-radius:2px"></div>
<div class="t" style="left:1673px;top:833px;color:#555">10 条/页</div>
<svg class="a" style="left:1727px;top:839px" width="11" height="7" viewBox="0 0 11 7"><path d="M0.8 0.8 L5.5 5.8 L10.2 0.8" fill="none" stroke="#c0c0c0" stroke-width="1"/></svg>
<div class="t" style="left:1758px;top:833px;color:#555">跳至</div>
<div class="a" style="left:1794px;top:827px;width:50px;height:32px;border:1px solid #d9d9d9;border-radius:2px"></div>
<div class="t" style="left:1852px;top:833px;color:#555">页</div>
<svg class="a" style="left:1878px;top:99px" width="38" height="38" viewBox="0 0 38 38">
<defs><clipPath id="avc"><circle cx="19" cy="19" r="16.6"/></clipPath><filter id="avs" x="-20%" y="-20%" width="140%" height="140%"><feDropShadow dx="0" dy="0.5" stdDeviation="1" flood-color="#000" flood-opacity="0.15"/></filter></defs>
<circle cx="19" cy="19" r="17.6" fill="#fff" filter="url(#avs)"/>
<g clip-path="url(#avc)">
<rect x="0" y="0" width="38" height="38" fill="#cde4fb"/>
<path d="M9 27 C8.5 18 9 7 19.5 4.6 C26 4.6 29.5 9 29.3 16 L29 27.5 L24 27.5 L14 27.5 Z" fill="#4a3630"/>
<path d="M13.8 16 C14.5 11.5 18 10 22.5 10.6 C26.5 11.5 28.4 14 28.3 18 L28 21.5 C27.6 25 24.5 27 21.2 27 C17.5 27 14.6 24.8 14 21.5 Z" fill="#f5dcd3"/>
<path d="M12.5 17 C14 12 17.5 9 22 9.2 C25 9.5 27.5 11 28.5 14 C25 10.8 18 11 12.5 17 Z" fill="#4a3630"/>
<circle cx="29.2" cy="20.6" r="1.6" fill="#efc6b8"/>
<ellipse cx="16.4" cy="19" rx="1.7" ry="1.3" fill="#2a1f1c"/>
<ellipse cx="24.6" cy="19" rx="1.7" ry="1.3" fill="#2a1f1c"/>
<ellipse cx="20.6" cy="23.9" rx="1.4" ry="0.8" fill="#e88c82"/>
<rect x="17.5" y="26" width="6" height="5" fill="#f2d2c8"/>
<path d="M9 38 C9.5 33 12 31 17.5 30.5 L23.5 30.5 C28 31 30 33 30 38 Z" fill="#161616"/>
</g>
</svg>
<div class="a" style="left:0;top:50px;width:1920px;height:3px;background:linear-gradient(rgba(0,0,0,.06),rgba(0,0,0,0))"></div>
</body></html>
